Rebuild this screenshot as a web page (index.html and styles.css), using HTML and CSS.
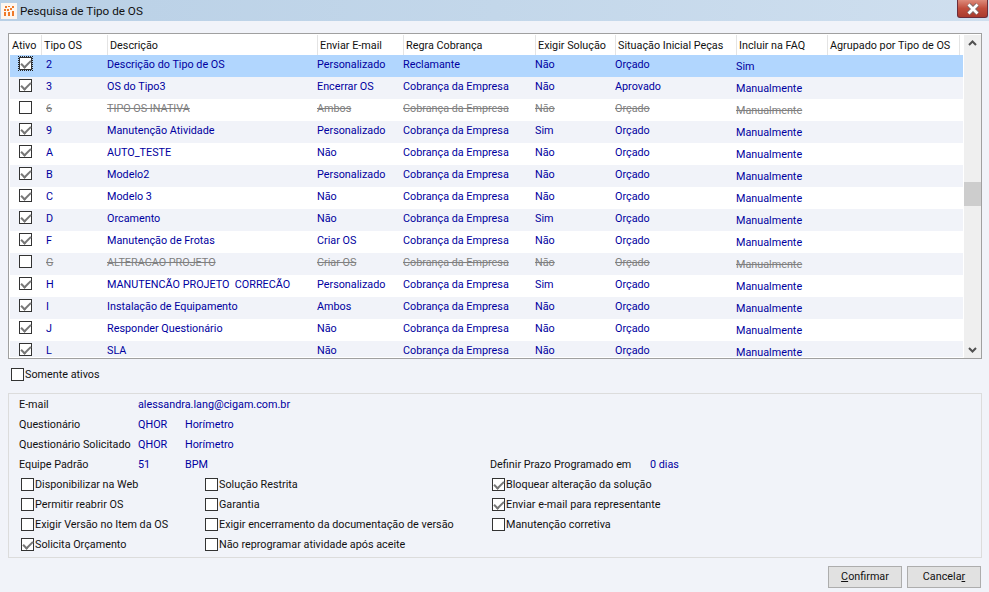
FILE: index.html
```html
<!DOCTYPE html>
<html lang="pt">
<head>
<meta charset="utf-8">
<title>Pesquisa de Tipo de OS</title>
<link rel="stylesheet" href="styles.css">
</head>
<body>
<header class="titlebar">
  <span class="app-icon"><svg width="16" height="16" viewBox="0 0 16 16"><rect width="16" height="16" fill="#fdf6f0"/><path d="M3 13V9h2v4zM7 13V9h2v4zM11 13V8h2v5zM3 8V6h2v2zM6 8V6h2v2zM9 7V5h2v2zM4 5V3h2v2zM7 4V3h2v1zM11 5V3h2v2z" fill="#ee7a2a"/></svg></span>
  <span class="title-text">Pesquisa de Tipo de OS</span>
  <button class="close" type="button"><svg width="16" height="12" viewBox="0 0 16 12"><path d="M3.500 1.500l9 9M12.500 1.500l-9 9" stroke="#7b6a6a" stroke-width="4.500" fill="none"/><path d="M3.500 1.500l9 9M12.500 1.500l-9 9" stroke="#fff" stroke-width="2.800" fill="none"/></svg></button>
</header>
<main class="content">
  <section class="grid">
    <div class="grid-body">
      <div class="row head">
        <span>Ativo</span><span>Tipo OS</span><span>Descrição</span><span>Enviar E-mail</span><span>Regra Cobrança</span><span>Exigir Solução</span><span>Situação Inicial Peças</span><span>Incluir na FAQ</span><span>Agrupado por Tipo de OS</span><span></span>
      </div>
      <div class="row sel"><i class="cb on focus"></i><span>2</span><span>Descrição do Tipo de OS</span><span>Personalizado</span><span>Reclamante</span><span>Não</span><span>Orçado</span><span class="low">Sim</span><span></span></div>
      <div class="row alt"><i class="cb on"></i><span>3</span><span>OS do Tipo3</span><span>Encerrar OS</span><span>Cobrança da Empresa</span><span>Não</span><span>Aprovado</span><span class="low">Manualmente</span><span></span></div>
      <div class="row off"><i class="cb"></i><span>6</span><span>TIPO OS INATIVA</span><span>Ambos</span><span>Cobrança da Empresa</span><span>Não</span><span>Orçado</span><span class="low">Manualmente</span><span></span></div>
      <div class="row alt"><i class="cb on"></i><span>9</span><span>Manutenção Atividade</span><span>Personalizado</span><span>Cobrança da Empresa</span><span>Sim</span><span>Orçado</span><span class="low">Manualmente</span><span></span></div>
      <div class="row"><i class="cb on"></i><span>A</span><span>AUTO_TESTE</span><span>Não</span><span>Cobrança da Empresa</span><span>Não</span><span>Orçado</span><span class="low">Manualmente</span><span></span></div>
      <div class="row alt"><i class="cb on"></i><span>B</span><span>Modelo2</span><span>Personalizado</span><span>Cobrança da Empresa</span><span>Não</span><span>Orçado</span><span class="low">Manualmente</span><span></span></div>
      <div class="row"><i class="cb on"></i><span>C</span><span>Modelo 3</span><span>Não</span><span>Cobrança da Empresa</span><span>Não</span><span>Orçado</span><span class="low">Manualmente</span><span></span></div>
      <div class="row alt"><i class="cb on"></i><span>D</span><span>Orcamento</span><span>Não</span><span>Cobrança da Empresa</span><span>Sim</span><span>Orçado</span><span class="low">Manualmente</span><span></span></div>
      <div class="row"><i class="cb on"></i><span>F</span><span>Manutenção de Frotas</span><span>Criar OS</span><span>Cobrança da Empresa</span><span>Não</span><span>Orçado</span><span class="low">Manualmente</span><span></span></div>
      <div class="row alt off"><i class="cb"></i><span>G</span><span>ALTERACAO PROJETO</span><span>Criar OS</span><span>Cobrança da Empresa</span><span>Não</span><span>Orçado</span><span class="low">Manualmente</span><span></span></div>
      <div class="row"><i class="cb on"></i><span>H</span><span>MANUTENCÃO PROJETO&nbsp; CORRECÃO</span><span>Personalizado</span><span>Cobrança da Empresa</span><span>Sim</span><span>Orçado</span><span class="low">Manualmente</span><span></span></div>
      <div class="row alt"><i class="cb on"></i><span>I</span><span>Instalação de Equipamento</span><span>Ambos</span><span>Cobrança da Empresa</span><span>Não</span><span>Orçado</span><span class="low">Manualmente</span><span></span></div>
      <div class="row"><i class="cb on"></i><span>J</span><span>Responder Questionário</span><span>Não</span><span>Cobrança da Empresa</span><span>Não</span><span>Orçado</span><span class="low">Manualmente</span><span></span></div>
      <div class="row alt last"><i class="cb on"></i><span>L</span><span>SLA</span><span>Não</span><span>Cobrança da Empresa</span><span>Não</span><span>Orçado</span><span class="low">Manualmente</span><span></span></div>
    </div>
    <div class="scrollbar">
      <svg width="17" height="17" viewBox="0 0 17 17"><path d="M5 10l3.500-3.500L12 10" stroke="#505050" stroke-width="2" fill="none"/></svg>
      <div class="track"><div class="thumb"></div></div>
      <svg width="17" height="17" viewBox="0 0 17 17"><path d="M5 7l3.500 3.500L12 7" stroke="#505050" stroke-width="2" fill="none"/></svg>
    </div>
  </section>
  <label class="only-active"><i class="cb"></i>Somente ativos</label>
  <section class="panel">
    <div class="info">
      <span>E-mail</span><b class="email">alessandra.lang@cigam.com.br</b>
      <span>Questionário</span><b>QHOR</b><b class="wide">Horímetro</b>
      <span>Questionário Solicitado</span><b>QHOR</b><b class="wide">Horímetro</b>
      <span>Equipe Padrão</span><b>51</b><b>BPM</b><span>Definir Prazo Programado em</span><b>0 dias</b>
    </div>
    <div class="options">
      <label><i class="cb"></i>Disponibilizar na Web</label>
      <label><i class="cb"></i>Solução Restrita</label>
      <label><i class="cb on"></i>Bloquear alteração da solução</label>
      <label><i class="cb"></i>Permitir reabrir OS</label>
      <label><i class="cb"></i>Garantia</label>
      <label><i class="cb on"></i>Enviar e-mail para representante</label>
      <label><i class="cb"></i>Exigir Versão no Item da OS</label>
      <label><i class="cb"></i>Exigir encerramento da documentação de versão</label>
      <label><i class="cb"></i>Manutenção corretiva</label>
      <label><i class="cb on"></i>Solicita Orçamento</label>
      <label><i class="cb"></i>Não reprogramar atividade após aceite</label>
    </div>
  </section>
  <footer class="actions">
    <button type="button"><u>C</u>onfirmar</button>
    <button type="button">Cancela<u>r</u></button>
  </footer>
</main>
</body>
</html>
```
FILE: styles.css
```css
* { box-sizing: border-box; }
html, body { margin: 0; height: 100%; }
body {
  width: 989px; height: 592px; overflow: hidden;
  background: #f1f3f9; color: #111;
  font: 10.8px/14px Roboto, sans-serif;
}
.titlebar {
  height: 21px; display: flex; align-items: center; padding: 0 1px 0 1px;
  background: linear-gradient(90deg, #b9d0e6 0, #c3d7ea 50%, #cfdfef 100%);
}
.app-icon { width: 16px; height: 16px; display: block; }
.app-icon svg { display: block; }
.title-text { margin-left: 3px; font-size: 11.7px; flex: 1; }
.close {
  width: 31px; height: 18px; padding: 0; align-self: flex-start; border: 1px solid #6b2c3a; border-top: 0; border-radius: 0 0 3px 3px;
  background: linear-gradient(#dd8a7a, #c14d3c 50%, #a93a2d);
  display: flex; align-items: center; justify-content: center;
}
.content { padding: 12px 7px 0 8px; }
.grid {
  height: 326px; display: flex; overflow: hidden; background: #fff;
  border: 1px solid #a0a0a0; padding: 1px 0 0 1px;
}
.grid-body { width: 953px; flex: none; overflow: hidden; }
.row {
  display: grid; height: 22px; align-items: start; padding-top: 2px;
  grid-template-columns: 31px 66px 210px 86px 132px 80px 121px 91px 132px 4px;
  color: #0000a0; white-space: nowrap;
}
.row > span { padding-top: 1px; }
.row > span:nth-of-type(1) { padding-left: 5px; }
.row.alt { background: #f1f3f9; }
.row.sel { background: #b1d6fe; }
.row.off { color: #808080; text-decoration: line-through; }
.row .low { position: relative; top: 2px; }
.row.last { height: 16px; }
.row > .cb { margin-left: 9px; }
.head { height: 20px; padding-top: 0; background: #fff; color: #111; }
.head > span, .head > span:nth-of-type(1) { border-left: 1px solid #e4e4e4; height: 20px; line-height: 20px; padding-left: 2px; }
.head > span:first-child, .head > span:first-child:nth-of-type(1) { border-left: 0; padding-left: 2px; }
.scrollbar { width: 17px; flex: none; margin-left: 1px; background: #efefef; display: flex; flex-direction: column; }
.scrollbar svg { display: block; flex: none; }
.track { flex: 1; padding-top: 130px; }
.thumb { height: 24px; background: #cdcdcd; }
.cb {
  display: inline-block; flex: none; width: 13px; height: 13px; background: #fff;
  border: 1px solid #333; position: relative;
}
.cb.on::after {
  content: ""; position: absolute; left: 1px; top: 2px; width: 8px; height: 4px;
  border-left: 2px solid #777; border-bottom: 2px solid #777; transform: rotate(-45deg);
}
.cb.focus { outline: 1px dotted #222; }
.only-active { display: flex; align-items: center; gap: 1px; height: 16px; padding-top: 2px; margin: 7px 0 0 3px; }
.only-active .cb, .options .cb { margin-bottom: 2px; }
.panel { height: 165px; margin-top: 11px; border: 1px solid #dcdcdc; padding: 0 0 0 10px; }
.info {
  display: grid; grid-template-columns: 119px 47px 305px 160px 1fr; grid-auto-rows: 20px; align-items: center;
}
.info > * { padding-top: 2px; }
.info b { font-weight: 400; color: #0000a0; }
.info .wide { grid-column: span 3; }
.info .email { grid-column: span 4; }
.options {
  display: grid; grid-template-columns: 184px 287px 1fr; grid-auto-rows: 20px; margin-left: 2px;
}
.options label { display: flex; align-items: center; gap: 1px; padding-top: 2px; }
.actions { display: flex; justify-content: flex-end; gap: 5px; margin-top: 8px; padding-right: 1px; }
.actions button {
  width: 74px; height: 22px; padding: 0; font: inherit; color: #111;
  background: #e1e1e1; border: 1px solid #adadad;
}
```
